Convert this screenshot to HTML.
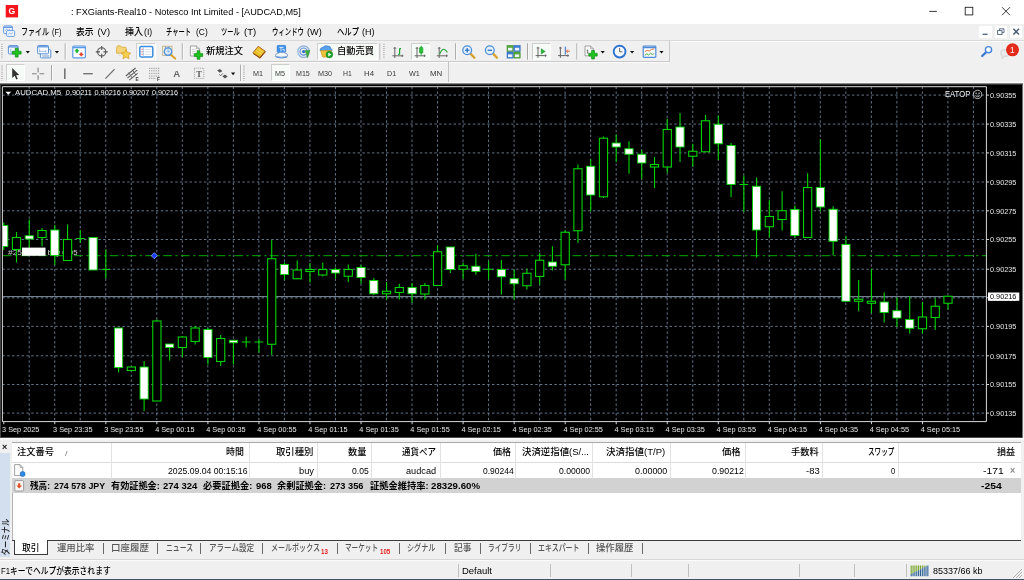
<!DOCTYPE html>
<html lang="ja"><head><meta charset="utf-8"><title>FXGiants-Real10 - Notesco Int Limited - [AUDCAD,M5]</title>
<style>
html,body{margin:0;padding:0}
body{width:1024px;height:580px;overflow:hidden;background:#f0f0f0;position:relative;font-family:'Liberation Sans','Noto Sans CJK JP',sans-serif}
.t{position:absolute;white-space:pre;transform-origin:0 50%;display:block}
.abs{position:absolute}
#root{position:absolute;left:0;top:0;width:1024px;height:580px;will-change:transform}
#titlebar{left:0;top:0;width:1024px;height:23.5px;background:#fff}
#menubar{left:0;top:23.5px;width:1024px;height:16.5px;background:#f0f0f0}
#tb1{left:0;top:40px;width:669.5px;height:22px;border-top:1px solid #d9d9d9;border-bottom:1px solid #c9c9c9;border-right:1px solid #c9c9c9;box-sizing:border-box;background:#f0f0f0}
#tb1line{left:0;top:40px;width:1024px;height:1px;background:#d9d9d9}
#tb1w{left:0;top:41px;width:1024px;height:1px;background:#fafafa}
#tb2{left:0;top:62px;width:448.5px;height:21px;border-right:1px solid #c4c4c4;box-sizing:border-box}
#tb2w{left:0;top:62px;width:669px;height:1px;background:#fbfbfb}
#tb2b{left:0;top:82.3px;width:1024px;height:1px;background:#fdfdfd}
.pressed{background:#f7fbf7;border:1px solid #fdfdfd;border-left-color:#cfcfcf;border-top-color:#cfcfcf;box-sizing:border-box}
#term{left:0;top:442px;width:1024px;height:115px}
#strip{left:0;top:453px;width:10.300px;height:103.500px;background:#d3dfee}
#table{left:11.500px;top:442px;width:1009.500px;height:99px;background:#fff;border-top:1px solid #a9a9a9;border-left:1px solid #b4b4b4;box-sizing:border-box}
#thead{left:11.5px;top:443px;width:1009.5px;height:19.5px;background:#fff;border-bottom:1px solid #dcdcdc;box-sizing:border-box}
#row1{left:11.5px;top:462.5px;width:1009.5px;height:16px;background:#fff}
#sum{left:11.500px;top:478.300px;width:1009.500px;height:15.200px;background:#d2d2d2}
.cs{position:absolute;top:443px;width:1px;height:35.5px;background:#e2e2e2}
#tabline{left:11.5px;top:540.3px;width:1009.5px;height:1.2px;background:#3c3c3c}
#tabact{left:13.6px;top:540.3px;width:34.8px;height:15px;background:#fff;border:1.2px solid #3c3c3c;border-top:none;box-sizing:border-box}
#stline{left:0;top:558.6px;width:1024px;height:1px;background:#d7d7d7}
#stline2{left:0;top:559.6px;width:1024px;height:1px;background:#fcfcfc}
#stbot{left:0;top:578.7px;width:1024px;height:1.3px;background:#44546a}
.ss{position:absolute;top:563.5px;width:1px;height:13.5px;background:#c0c0c0}
.mdi{position:absolute;top:25.7px;height:12.400px;background:#fff}
</style></head><body><div id="root">
<div id="titlebar" class="abs"></div>
<div id="menubar" class="abs"></div>
<div id="tb1line" class="abs"></div><div id="tb1w" class="abs"></div>
<div id="tb1" class="abs"></div><div id="tb2w" class="abs"></div>
<div id="tb2" class="abs"></div><div id="tb2b" class="abs"></div>
<div class="abs pressed" style="left:136px;top:43.3px;width:20.0px;height:17.0px"></div>
<div class="abs pressed" style="left:317.3px;top:43.3px;width:61.2px;height:17.0px"></div>
<div class="abs pressed" style="left:411px;top:43.3px;width:19.0px;height:17.0px"></div>
<div class="abs pressed" style="left:531.5px;top:43.3px;width:19.5px;height:17.0px"></div>
<div class="abs pressed" style="left:6px;top:64.3px;width:19.4px;height:17.0px"></div>
<div class="abs pressed" style="left:270.5px;top:64.3px;width:19.5px;height:17.0px"></div>
<div class="mdi" style="left:979px;width:13.2px"></div>
<div class="mdi" style="left:994.6px;width:12.8px"></div>
<div class="mdi" style="left:1009.6px;width:12.8px"></div>
<svg class="chart" width="1024" height="580" viewBox="0 0 1024 580" style="position:absolute;left:0;top:0" font-family="'Liberation Sans','Noto Sans CJK JP',sans-serif">
<defs><linearGradient id="tg" x1="0" y1="0" x2="0" y2="1"><stop offset="0" stop-color="#a8a8a8"/><stop offset="1" stop-color="#202020"/></linearGradient><clipPath id="cc"><rect x="2.9" y="86.7" width="983.5" height="334.90000000000003"/></clipPath></defs>
<rect x="0" y="83" width="1023" height="2" fill="url(#tg)"/>
<rect x="0" y="437.600" width="1024" height="1.900" fill="#fbfbfb"/>
<rect x="0" y="84.800" width="1022.300" height="352.900" fill="#000"/>
<rect x="0" y="84.8" width="0.8" height="352.8" fill="#555"/>
<rect x="1022" y="84" width="0.8" height="354" fill="#666"/>
<g stroke="#687b8f" stroke-width="0.95" stroke-dasharray="2.4 2.4" fill="none" clip-path="url(#cc)">
<path d="M29.20 86.7V421.6"/>
<path d="M54.72 86.7V421.6"/>
<path d="M80.24 86.7V421.6"/>
<path d="M105.76 86.7V421.6"/>
<path d="M131.28 86.7V421.6"/>
<path d="M156.80 86.7V421.6"/>
<path d="M182.32 86.7V421.6"/>
<path d="M207.84 86.7V421.6"/>
<path d="M233.36 86.7V421.6"/>
<path d="M258.88 86.7V421.6"/>
<path d="M284.40 86.7V421.6"/>
<path d="M309.92 86.7V421.6"/>
<path d="M335.44 86.7V421.6"/>
<path d="M360.96 86.7V421.6"/>
<path d="M386.48 86.7V421.6"/>
<path d="M412.00 86.7V421.6"/>
<path d="M437.52 86.7V421.6"/>
<path d="M463.04 86.7V421.6"/>
<path d="M488.56 86.7V421.6"/>
<path d="M514.08 86.7V421.6"/>
<path d="M539.60 86.7V421.6"/>
<path d="M565.12 86.7V421.6"/>
<path d="M590.64 86.7V421.6"/>
<path d="M616.16 86.7V421.6"/>
<path d="M641.68 86.7V421.6"/>
<path d="M667.20 86.7V421.6"/>
<path d="M692.72 86.7V421.6"/>
<path d="M718.24 86.7V421.6"/>
<path d="M743.76 86.7V421.6"/>
<path d="M769.28 86.7V421.6"/>
<path d="M794.80 86.7V421.6"/>
<path d="M820.32 86.7V421.6"/>
<path d="M845.84 86.7V421.6"/>
<path d="M871.36 86.7V421.6"/>
<path d="M896.88 86.7V421.6"/>
<path d="M922.40 86.7V421.6"/>
<path d="M947.92 86.7V421.6"/>
<path d="M973.44 86.7V421.6"/>
<path d="M2.4 95.10H986.4"/>
<path d="M2.4 124.10H986.4"/>
<path d="M2.4 152.90H986.4"/>
<path d="M2.4 182.00H986.4"/>
<path d="M2.4 210.80H986.4"/>
<path d="M2.4 239.50H986.4"/>
<path d="M2.4 269.20H986.4"/>
<path d="M2.4 297.80H986.4"/>
<path d="M2.4 326.40H986.4"/>
<path d="M2.4 355.80H986.4"/>
<path d="M2.4 384.50H986.4"/>
<path d="M2.4 413.10H986.4"/>
</g>
<path d="M2.9 255.7H986.4" stroke="#00aa00" stroke-width="1" stroke-dasharray="8.8 3.4 2.2 3.4" fill="none"/>
<path d="M2.9 296.6H986.4" stroke="#7e8d9d" stroke-width="1" fill="none"/>
<text x="8" y="254.6" font-size="7.3" fill="#d0d0d0" textLength="14" lengthAdjust="spacingAndGlyphs">#25</text>
<text x="47.5" y="254.6" font-size="7.3" fill="#d0d0d0" textLength="30" lengthAdjust="spacingAndGlyphs">buy 0.05</text>
<g clip-path="url(#cc)">
<path d="M3.75 222.5V250.0" stroke="#00d400" stroke-width="1.1"/>
<rect x="-0.35" y="225.5" width="8.20" height="21.00" fill="#fff" stroke="#00d400" stroke-width="0.9"/>
<path d="M16.51 232.0V262.5" stroke="#00d400" stroke-width="1.1"/>
<rect x="12.41" y="237.5" width="8.20" height="12.00" fill="#000" stroke="#00d400" stroke-width="1.1"/>
<path d="M29.27 219.5V250.0" stroke="#00d400" stroke-width="1.1"/>
<rect x="25.17" y="235.75" width="8.20" height="3.25" fill="#fff" stroke="#00d400" stroke-width="0.9"/>
<path d="M42.03 228.0V246.25" stroke="#00d400" stroke-width="1.1"/>
<rect x="37.93" y="230.5" width="8.20" height="7.00" fill="#000" stroke="#00d400" stroke-width="1.1"/>
<path d="M54.79 225.0V265.0" stroke="#00d400" stroke-width="1.1"/>
<rect x="50.69" y="230.0" width="8.20" height="25.50" fill="#fff" stroke="#00d400" stroke-width="0.9"/>
<path d="M67.55 224.5V260.5" stroke="#00d400" stroke-width="1.1"/>
<rect x="63.45" y="239.5" width="8.20" height="21.00" fill="#000" stroke="#00d400" stroke-width="1.1"/>
<path d="M80.31 230.0V243.0" stroke="#00d400" stroke-width="1.1"/>
<path d="M75.91 238.5H84.71" stroke="#00d400" stroke-width="1.1"/>
<path d="M93.07 237.5V270.0" stroke="#00d400" stroke-width="1.1"/>
<rect x="88.97" y="237.5" width="8.20" height="32.50" fill="#fff" stroke="#00d400" stroke-width="0.9"/>
<path d="M105.83 249.25V278.75" stroke="#00d400" stroke-width="1.1"/>
<path d="M101.43 269.5H110.23" stroke="#00d400" stroke-width="1.1"/>
<path d="M118.59 328.0V372.5" stroke="#00d400" stroke-width="1.1"/>
<rect x="114.49" y="328.0" width="8.20" height="39.50" fill="#fff" stroke="#00d400" stroke-width="0.9"/>
<path d="M131.35 367.0V370.5" stroke="#00d400" stroke-width="1.1"/>
<rect x="127.25" y="367.0" width="8.20" height="3.50" fill="#000" stroke="#00d400" stroke-width="1.1"/>
<path d="M144.11 361.0V411.0" stroke="#00d400" stroke-width="1.1"/>
<rect x="140.01" y="367.0" width="8.20" height="32.00" fill="#fff" stroke="#00d400" stroke-width="0.9"/>
<path d="M156.87 319.5V401.0" stroke="#00d400" stroke-width="1.1"/>
<rect x="152.77" y="321.0" width="8.20" height="80.00" fill="#000" stroke="#00d400" stroke-width="1.1"/>
<path d="M169.63 344.0V360.5" stroke="#00d400" stroke-width="1.1"/>
<rect x="165.53" y="344.0" width="8.20" height="3.50" fill="#fff" stroke="#00d400" stroke-width="0.9"/>
<path d="M182.39 336.0V357.0" stroke="#00d400" stroke-width="1.1"/>
<rect x="178.29" y="337.0" width="8.20" height="10.50" fill="#000" stroke="#00d400" stroke-width="1.1"/>
<path d="M195.15 326.0V344.5" stroke="#00d400" stroke-width="1.1"/>
<rect x="191.05" y="328.0" width="8.20" height="13.50" fill="#000" stroke="#00d400" stroke-width="1.1"/>
<path d="M207.91 328.0V364.5" stroke="#00d400" stroke-width="1.1"/>
<rect x="203.81" y="329.5" width="8.20" height="28.00" fill="#fff" stroke="#00d400" stroke-width="0.9"/>
<path d="M220.67 335.0V366.0" stroke="#00d400" stroke-width="1.1"/>
<rect x="216.57" y="338.5" width="8.20" height="23.00" fill="#000" stroke="#00d400" stroke-width="1.1"/>
<path d="M233.43 340.0V364.5" stroke="#00d400" stroke-width="1.1"/>
<rect x="229.33" y="340.25" width="8.20" height="2.50" fill="#fff" stroke="#00d400" stroke-width="0.9"/>
<path d="M246.19 336.5V347.5" stroke="#00d400" stroke-width="1.1"/>
<path d="M241.79 342.0H250.59" stroke="#00d400" stroke-width="1.1"/>
<path d="M258.95 339.0V352.5" stroke="#00d400" stroke-width="1.1"/>
<path d="M254.55 342.0H263.35" stroke="#00d400" stroke-width="1.1"/>
<path d="M271.71 240.0V355.0" stroke="#00d400" stroke-width="1.1"/>
<rect x="267.61" y="258.75" width="8.20" height="85.50" fill="#000" stroke="#00d400" stroke-width="1.1"/>
<path d="M284.47 262.5V280.0" stroke="#00d400" stroke-width="1.1"/>
<rect x="280.37" y="264.5" width="8.20" height="10.00" fill="#fff" stroke="#00d400" stroke-width="0.9"/>
<path d="M297.23 260.5V278.75" stroke="#00d400" stroke-width="1.1"/>
<rect x="293.13" y="270.0" width="8.20" height="8.75" fill="#000" stroke="#00d400" stroke-width="1.1"/>
<path d="M309.99 263.0V282.5" stroke="#00d400" stroke-width="1.1"/>
<rect x="305.89" y="269.5" width="8.20" height="2.00" fill="#000" stroke="#00d400" stroke-width="1.1"/>
<path d="M322.75 262.5V276.5" stroke="#00d400" stroke-width="1.1"/>
<rect x="318.65" y="269.5" width="8.20" height="5.50" fill="#000" stroke="#00d400" stroke-width="1.1"/>
<path d="M335.51 267.5V278.75" stroke="#00d400" stroke-width="1.1"/>
<rect x="331.41" y="269.5" width="8.20" height="3.50" fill="#fff" stroke="#00d400" stroke-width="0.9"/>
<path d="M348.27 264.5V282.0" stroke="#00d400" stroke-width="1.1"/>
<rect x="344.17" y="269.5" width="8.20" height="6.75" fill="#000" stroke="#00d400" stroke-width="1.1"/>
<path d="M361.03 265.0V283.75" stroke="#00d400" stroke-width="1.1"/>
<rect x="356.93" y="267.5" width="8.20" height="10.00" fill="#fff" stroke="#00d400" stroke-width="0.9"/>
<path d="M373.79 278.0V295.0" stroke="#00d400" stroke-width="1.1"/>
<rect x="369.69" y="280.5" width="8.20" height="13.25" fill="#fff" stroke="#00d400" stroke-width="0.9"/>
<path d="M386.55 282.0V299.5" stroke="#00d400" stroke-width="1.1"/>
<rect x="382.45" y="291.25" width="8.20" height="2.50" fill="#000" stroke="#00d400" stroke-width="1.1"/>
<path d="M399.31 283.75V299.5" stroke="#00d400" stroke-width="1.1"/>
<rect x="395.21" y="287.5" width="8.20" height="5.00" fill="#000" stroke="#00d400" stroke-width="1.1"/>
<path d="M412.07 283.0V303.0" stroke="#00d400" stroke-width="1.1"/>
<rect x="407.97" y="287.5" width="8.20" height="6.25" fill="#fff" stroke="#00d400" stroke-width="0.9"/>
<path d="M424.83 283.0V299.5" stroke="#00d400" stroke-width="1.1"/>
<rect x="420.73" y="285.5" width="8.20" height="8.50" fill="#000" stroke="#00d400" stroke-width="1.1"/>
<path d="M437.59 245.0V285.5" stroke="#00d400" stroke-width="1.1"/>
<rect x="433.49" y="251.75" width="8.20" height="33.75" fill="#000" stroke="#00d400" stroke-width="1.1"/>
<path d="M450.35 247.0V273.0" stroke="#00d400" stroke-width="1.1"/>
<rect x="446.25" y="247.0" width="8.20" height="22.50" fill="#fff" stroke="#00d400" stroke-width="0.9"/>
<path d="M463.11 262.5V279.0" stroke="#00d400" stroke-width="1.1"/>
<rect x="459.01" y="265.75" width="8.20" height="3.50" fill="#000" stroke="#00d400" stroke-width="1.1"/>
<path d="M475.87 253.75V274.75" stroke="#00d400" stroke-width="1.1"/>
<rect x="471.77" y="266.25" width="8.20" height="5.25" fill="#fff" stroke="#00d400" stroke-width="0.9"/>
<path d="M488.63 261.25V279.5" stroke="#00d400" stroke-width="1.1"/>
<path d="M484.23 269.25H493.03" stroke="#00d400" stroke-width="1.1"/>
<path d="M501.39 260.0V294.5" stroke="#00d400" stroke-width="1.1"/>
<rect x="497.29" y="269.5" width="8.20" height="7.25" fill="#fff" stroke="#00d400" stroke-width="0.9"/>
<path d="M514.15 269.5V299.5" stroke="#00d400" stroke-width="1.1"/>
<rect x="510.05" y="278.75" width="8.20" height="5.00" fill="#fff" stroke="#00d400" stroke-width="0.9"/>
<path d="M526.91 268.75V289.5" stroke="#00d400" stroke-width="1.1"/>
<rect x="522.81" y="273.25" width="8.20" height="12.50" fill="#000" stroke="#00d400" stroke-width="1.1"/>
<path d="M539.67 253.0V284.5" stroke="#00d400" stroke-width="1.1"/>
<rect x="535.57" y="260.25" width="8.20" height="16.25" fill="#000" stroke="#00d400" stroke-width="1.1"/>
<path d="M552.43 246.25V270.5" stroke="#00d400" stroke-width="1.1"/>
<rect x="548.33" y="262.0" width="8.20" height="4.25" fill="#fff" stroke="#00d400" stroke-width="0.9"/>
<path d="M565.19 230.0V279.5" stroke="#00d400" stroke-width="1.1"/>
<rect x="561.09" y="232.25" width="8.20" height="32.50" fill="#000" stroke="#00d400" stroke-width="1.1"/>
<path d="M577.95 164.5V243.0" stroke="#00d400" stroke-width="1.1"/>
<rect x="573.85" y="168.75" width="8.20" height="62.00" fill="#000" stroke="#00d400" stroke-width="1.1"/>
<path d="M590.71 159.25V211.25" stroke="#00d400" stroke-width="1.1"/>
<rect x="586.61" y="166.25" width="8.20" height="28.75" fill="#fff" stroke="#00d400" stroke-width="0.9"/>
<path d="M603.47 136.5V198.0" stroke="#00d400" stroke-width="1.1"/>
<rect x="599.37" y="138.25" width="8.20" height="58.50" fill="#000" stroke="#00d400" stroke-width="1.1"/>
<path d="M616.23 134.5V162.0" stroke="#00d400" stroke-width="1.1"/>
<rect x="612.13" y="143.0" width="8.20" height="4.00" fill="#fff" stroke="#00d400" stroke-width="0.9"/>
<path d="M628.99 141.25V173.75" stroke="#00d400" stroke-width="1.1"/>
<rect x="624.89" y="148.75" width="8.20" height="5.50" fill="#fff" stroke="#00d400" stroke-width="0.9"/>
<path d="M641.75 150.0V178.75" stroke="#00d400" stroke-width="1.1"/>
<rect x="637.65" y="154.25" width="8.20" height="8.75" fill="#fff" stroke="#00d400" stroke-width="0.9"/>
<path d="M654.51 157.0V188.0" stroke="#00d400" stroke-width="1.1"/>
<rect x="650.41" y="164.5" width="8.20" height="2.50" fill="#000" stroke="#00d400" stroke-width="1.1"/>
<path d="M667.27 118.75V173.0" stroke="#00d400" stroke-width="1.1"/>
<rect x="663.17" y="129.5" width="8.20" height="37.50" fill="#000" stroke="#00d400" stroke-width="1.1"/>
<path d="M680.03 113.0V162.0" stroke="#00d400" stroke-width="1.1"/>
<rect x="675.93" y="127.0" width="8.20" height="20.00" fill="#fff" stroke="#00d400" stroke-width="0.9"/>
<path d="M692.79 143.75V167.0" stroke="#00d400" stroke-width="1.1"/>
<rect x="688.69" y="151.25" width="8.20" height="5.00" fill="#000" stroke="#00d400" stroke-width="1.1"/>
<path d="M705.55 115.0V151.75" stroke="#00d400" stroke-width="1.1"/>
<rect x="701.45" y="120.75" width="8.20" height="31.00" fill="#000" stroke="#00d400" stroke-width="1.1"/>
<path d="M718.31 115.5V160.0" stroke="#00d400" stroke-width="1.1"/>
<rect x="714.21" y="124.25" width="8.20" height="19.50" fill="#fff" stroke="#00d400" stroke-width="0.9"/>
<path d="M731.07 143.0V197.0" stroke="#00d400" stroke-width="1.1"/>
<rect x="726.97" y="145.5" width="8.20" height="39.00" fill="#fff" stroke="#00d400" stroke-width="0.9"/>
<path d="M743.83 175.5V212.0" stroke="#00d400" stroke-width="1.1"/>
<path d="M739.43 184.5H748.23" stroke="#00d400" stroke-width="1.1"/>
<path d="M756.59 177.5V257.5" stroke="#00d400" stroke-width="1.1"/>
<rect x="752.49" y="186.25" width="8.20" height="43.75" fill="#fff" stroke="#00d400" stroke-width="0.9"/>
<path d="M769.35 200.0V237.5" stroke="#00d400" stroke-width="1.1"/>
<rect x="765.25" y="216.5" width="8.20" height="10.25" fill="#000" stroke="#00d400" stroke-width="1.1"/>
<path d="M782.11 191.25V230.5" stroke="#00d400" stroke-width="1.1"/>
<rect x="778.01" y="210.75" width="8.20" height="8.75" fill="#000" stroke="#00d400" stroke-width="1.1"/>
<path d="M794.87 205.5V237.75" stroke="#00d400" stroke-width="1.1"/>
<rect x="790.77" y="209.5" width="8.20" height="26.00" fill="#fff" stroke="#00d400" stroke-width="0.9"/>
<path d="M807.63 173.25V237.5" stroke="#00d400" stroke-width="1.1"/>
<rect x="803.53" y="187.5" width="8.20" height="50.00" fill="#000" stroke="#00d400" stroke-width="1.1"/>
<path d="M820.39 139.25V211.25" stroke="#00d400" stroke-width="1.1"/>
<rect x="816.29" y="187.5" width="8.20" height="19.50" fill="#fff" stroke="#00d400" stroke-width="0.9"/>
<path d="M833.15 206.25V255.5" stroke="#00d400" stroke-width="1.1"/>
<rect x="829.05" y="209.25" width="8.20" height="32.00" fill="#fff" stroke="#00d400" stroke-width="0.9"/>
<path d="M845.91 236.25V301.25" stroke="#00d400" stroke-width="1.1"/>
<rect x="841.81" y="244.5" width="8.20" height="56.75" fill="#fff" stroke="#00d400" stroke-width="0.9"/>
<path d="M858.67 280.0V311.25" stroke="#00d400" stroke-width="1.1"/>
<rect x="854.57" y="299.25" width="8.20" height="2.00" fill="#000" stroke="#00d400" stroke-width="1.1"/>
<path d="M871.43 268.75V313.0" stroke="#00d400" stroke-width="1.1"/>
<rect x="867.33" y="301.25" width="8.20" height="2.00" fill="#000" stroke="#00d400" stroke-width="1.1"/>
<path d="M884.19 292.5V322.5" stroke="#00d400" stroke-width="1.1"/>
<rect x="880.09" y="302.0" width="8.20" height="10.50" fill="#fff" stroke="#00d400" stroke-width="0.9"/>
<path d="M896.95 297.5V327.0" stroke="#00d400" stroke-width="1.1"/>
<rect x="892.85" y="310.75" width="8.20" height="7.25" fill="#fff" stroke="#00d400" stroke-width="0.9"/>
<path d="M909.71 296.25V333.75" stroke="#00d400" stroke-width="1.1"/>
<rect x="905.61" y="319.5" width="8.20" height="8.75" fill="#fff" stroke="#00d400" stroke-width="0.9"/>
<path d="M922.47 302.0V333.75" stroke="#00d400" stroke-width="1.1"/>
<rect x="918.37" y="317.0" width="8.20" height="11.75" fill="#000" stroke="#00d400" stroke-width="1.1"/>
<path d="M935.23 298.25V330.0" stroke="#00d400" stroke-width="1.1"/>
<rect x="931.13" y="306.25" width="8.20" height="11.25" fill="#000" stroke="#00d400" stroke-width="1.1"/>
<path d="M947.99 296.25V309.5" stroke="#00d400" stroke-width="1.1"/>
<rect x="943.89" y="296.25" width="8.20" height="7.00" fill="#000" stroke="#00d400" stroke-width="1.1"/>
</g>
<rect x="22" y="247.6" width="23.5" height="8.2" fill="#fff"/>
<path d="M154.3 252.6L157.4 255.7L154.3 258.8L151.2 255.7Z" fill="#1a3cff" stroke="#b8c4ff" stroke-width="0.6"/>
<path d="M2.4 421.6V86.7H986.4V421.6Z" fill="none" stroke="#d8d8d8" stroke-width="1"/>
<g font-size="7.3" fill="#e8e8e8">
<path d="M3.75 421.6v2.6" stroke="#d8d8d8" stroke-width="1"/>
<text x="2.05" y="432.1">3 Sep 2025</text>
<path d="M54.79 421.6v2.6" stroke="#d8d8d8" stroke-width="1"/>
<text x="53.09" y="432.1">3 Sep 23:35</text>
<path d="M105.83 421.6v2.6" stroke="#d8d8d8" stroke-width="1"/>
<text x="104.13" y="432.1">3 Sep 23:55</text>
<path d="M156.87 421.6v2.6" stroke="#d8d8d8" stroke-width="1"/>
<text x="155.17" y="432.1">4 Sep 00:15</text>
<path d="M207.91 421.6v2.6" stroke="#d8d8d8" stroke-width="1"/>
<text x="206.21" y="432.1">4 Sep 00:35</text>
<path d="M258.95 421.6v2.6" stroke="#d8d8d8" stroke-width="1"/>
<text x="257.25" y="432.1">4 Sep 00:55</text>
<path d="M309.99 421.6v2.6" stroke="#d8d8d8" stroke-width="1"/>
<text x="308.29" y="432.1">4 Sep 01:15</text>
<path d="M361.03 421.6v2.6" stroke="#d8d8d8" stroke-width="1"/>
<text x="359.33" y="432.1">4 Sep 01:35</text>
<path d="M412.07 421.6v2.6" stroke="#d8d8d8" stroke-width="1"/>
<text x="410.37" y="432.1">4 Sep 01:55</text>
<path d="M463.11 421.6v2.6" stroke="#d8d8d8" stroke-width="1"/>
<text x="461.41" y="432.1">4 Sep 02:15</text>
<path d="M514.15 421.6v2.6" stroke="#d8d8d8" stroke-width="1"/>
<text x="512.45" y="432.1">4 Sep 02:35</text>
<path d="M565.19 421.6v2.6" stroke="#d8d8d8" stroke-width="1"/>
<text x="563.49" y="432.1">4 Sep 02:55</text>
<path d="M616.23 421.6v2.6" stroke="#d8d8d8" stroke-width="1"/>
<text x="614.53" y="432.1">4 Sep 03:15</text>
<path d="M667.27 421.6v2.6" stroke="#d8d8d8" stroke-width="1"/>
<text x="665.57" y="432.1">4 Sep 03:35</text>
<path d="M718.31 421.6v2.6" stroke="#d8d8d8" stroke-width="1"/>
<text x="716.61" y="432.1">4 Sep 03:55</text>
<path d="M769.35 421.6v2.6" stroke="#d8d8d8" stroke-width="1"/>
<text x="767.65" y="432.1">4 Sep 04:15</text>
<path d="M820.39 421.6v2.6" stroke="#d8d8d8" stroke-width="1"/>
<text x="818.69" y="432.1">4 Sep 04:35</text>
<path d="M871.43 421.6v2.6" stroke="#d8d8d8" stroke-width="1"/>
<text x="869.73" y="432.1">4 Sep 04:55</text>
<path d="M922.47 421.6v2.6" stroke="#d8d8d8" stroke-width="1"/>
<text x="920.77" y="432.1">4 Sep 05:15</text>
</g>
<g font-size="7.3" fill="#e8e8e8">
<path d="M986.4 95.10h2.6" stroke="#d8d8d8" stroke-width="1"/>
<text x="990" y="97.80">0.90355</text>
<path d="M986.4 124.10h2.6" stroke="#d8d8d8" stroke-width="1"/>
<text x="990" y="126.80">0.90335</text>
<path d="M986.4 152.90h2.6" stroke="#d8d8d8" stroke-width="1"/>
<text x="990" y="155.60">0.90315</text>
<path d="M986.4 182.00h2.6" stroke="#d8d8d8" stroke-width="1"/>
<text x="990" y="184.70">0.90295</text>
<path d="M986.4 210.80h2.6" stroke="#d8d8d8" stroke-width="1"/>
<text x="990" y="213.50">0.90275</text>
<path d="M986.4 239.50h2.6" stroke="#d8d8d8" stroke-width="1"/>
<text x="990" y="242.20">0.90255</text>
<path d="M986.4 269.20h2.6" stroke="#d8d8d8" stroke-width="1"/>
<text x="990" y="271.90">0.90235</text>
<path d="M986.4 297.80h2.6" stroke="#d8d8d8" stroke-width="1"/>
<text x="990" y="300.50">0.90215</text>
<path d="M986.4 326.40h2.6" stroke="#d8d8d8" stroke-width="1"/>
<text x="990" y="329.10">0.90195</text>
<path d="M986.4 355.80h2.6" stroke="#d8d8d8" stroke-width="1"/>
<text x="990" y="358.50">0.90175</text>
<path d="M986.4 384.50h2.6" stroke="#d8d8d8" stroke-width="1"/>
<text x="990" y="387.20">0.90155</text>
<path d="M986.4 413.10h2.6" stroke="#d8d8d8" stroke-width="1"/>
<text x="990" y="415.80">0.90135</text>
</g>
<rect x="988" y="292.5" width="31.3" height="8.3" fill="#fff"/>
<text x="990" y="299.3" font-size="7.3" fill="#000">0.90216</text>
<path d="M5.4 91.7h5.8l-2.9 3.1z" fill="#fff"/>
<text x="15" y="95.1" font-size="7.3" fill="#f0f0f0" textLength="46.1" lengthAdjust="spacingAndGlyphs">AUDCAD,M5</text>
<text x="65.8" y="95.1" font-size="7.3" fill="#f0f0f0" textLength="26.1" lengthAdjust="spacingAndGlyphs">0.90211</text>
<text x="94.5" y="95.1" font-size="7.3" fill="#f0f0f0" textLength="26.4" lengthAdjust="spacingAndGlyphs">0.90216</text>
<text x="122.9" y="95.1" font-size="7.3" fill="#f0f0f0" textLength="26.4" lengthAdjust="spacingAndGlyphs">0.90207</text>
<text x="152" y="95.1" font-size="7.3" fill="#f0f0f0" textLength="26.0" lengthAdjust="spacingAndGlyphs">0.90216</text>
<text x="944.9" y="96.9" font-size="8.2" fill="#f0f0f0" textLength="25.4" lengthAdjust="spacingAndGlyphs">EATOP</text>
<g fill="none" stroke="#e0e0e0" stroke-width="0.8"><circle cx="977.6" cy="94.4" r="4.2"/><path d="M975.3 95.6q2.3 2.4 4.6 0"/></g><circle cx="976.1" cy="93.2" r="0.7" fill="#e0e0e0"/><circle cx="979.1" cy="93.2" r="0.7" fill="#e0e0e0"/>
</svg>
<div id="strip" class="abs"></div>
<div id="table" class="abs"></div><div id="thead" class="abs"></div><div id="row1" class="abs"></div><div id="sum" class="abs"></div>
<div class="cs" style="left:111px"></div>
<div class="cs" style="left:248.8px"></div>
<div class="cs" style="left:317.4px"></div>
<div class="cs" style="left:370.8px"></div>
<div class="cs" style="left:439.6px"></div>
<div class="cs" style="left:515.4px"></div>
<div class="cs" style="left:592.3px"></div>
<div class="cs" style="left:669.6px"></div>
<div class="cs" style="left:744.9px"></div>
<div class="cs" style="left:822.4px"></div>
<div class="cs" style="left:898.1px"></div>
<div id="tabline" class="abs"></div><div id="tabact" class="abs"></div>
<div id="stline" class="abs"></div><div id="stline2" class="abs"></div><div id="stbot" class="abs"></div>
<div class="ss" style="left:457.5px"></div>
<div class="ss" style="left:549.5px"></div>
<div class="ss" style="left:631.3px"></div>
<div class="ss" style="left:687.5px"></div>
<div class="ss" style="left:798.5px"></div>
<div class="ss" style="left:853.5px"></div>
<div class="ss" style="left:906.3px"></div>
<div class="abs" style="left:102.5px;top:543.2px;width:1px;height:10.6px;background:#6a6a6a"></div>
<div class="abs" style="left:156.5px;top:543.2px;width:1px;height:10.6px;background:#6a6a6a"></div>
<div class="abs" style="left:200.0px;top:543.2px;width:1px;height:10.6px;background:#6a6a6a"></div>
<div class="abs" style="left:262.0px;top:543.2px;width:1px;height:10.6px;background:#6a6a6a"></div>
<div class="abs" style="left:336.5px;top:543.2px;width:1px;height:10.6px;background:#6a6a6a"></div>
<div class="abs" style="left:398.8px;top:543.2px;width:1px;height:10.6px;background:#6a6a6a"></div>
<div class="abs" style="left:445.0px;top:543.2px;width:1px;height:10.6px;background:#6a6a6a"></div>
<div class="abs" style="left:480.0px;top:543.2px;width:1px;height:10.6px;background:#6a6a6a"></div>
<div class="abs" style="left:529.5px;top:543.2px;width:1px;height:10.6px;background:#6a6a6a"></div>
<div class="abs" style="left:587.5px;top:543.2px;width:1px;height:10.6px;background:#6a6a6a"></div>
<div class="abs" style="left:642.0px;top:543.2px;width:1px;height:10.6px;background:#6a6a6a"></div>
<span class="t" id="vterm" style="left:5.8px;top:532.3px;height:10px;line-height:10px;font-size:9px;color:#222;font-weight:500;transform-origin:0 50%;transform:rotate(-90deg) translate(-18.4px,0) scaleX(0.815)">ターミナル</span>
<span class="t" style="left:1.900px;top:440.700px;font-size:9px;line-height:12px;font-weight:700;color:#111">×</span>
<span class="t" id="t0" style="left:71.3px;top:4.20px;height:15.4px;line-height:15.4px;font-size:9.6px;color:#000;font-weight:500;transform:scaleX(0.9574);">: FXGiants-Real10 - Notesco Int Limited - [AUDCAD,M5]</span>
<span class="t" id="t1" style="left:21.3px;top:24.30px;height:15.0px;line-height:15.0px;font-size:9.4px;color:#000;font-weight:500;transform:scaleX(0.7464);">ファイル</span>
<span class="t" id="t2" style="left:51.8px;top:24.30px;height:15.0px;line-height:15.0px;font-size:9.4px;color:#000;font-weight:500;transform:scaleX(0.7927);">(F)</span>
<span class="t" id="t3" style="left:76.3px;top:24.30px;height:15.0px;line-height:15.0px;font-size:9.4px;color:#000;font-weight:500;transform:scaleX(0.9326);">表示</span>
<span class="t" id="t4" style="left:97.5px;top:24.30px;height:15.0px;line-height:15.0px;font-size:9.4px;color:#000;font-weight:500;transform:scaleX(1.0000);">(V)</span>
<span class="t" id="t5" style="left:125px;top:24.30px;height:15.0px;line-height:15.0px;font-size:9.4px;color:#000;font-weight:500;transform:scaleX(0.9592);">挿入</span>
<span class="t" id="t6" style="left:143.8px;top:24.30px;height:15.0px;line-height:15.0px;font-size:9.4px;color:#000;font-weight:500;transform:scaleX(0.9256);">(I)</span>
<span class="t" id="t7" style="left:166.3px;top:24.30px;height:15.0px;line-height:15.0px;font-size:9.4px;color:#000;font-weight:500;transform:scaleX(0.6681);">チャート</span>
<span class="t" id="t8" style="left:195.8px;top:24.30px;height:15.0px;line-height:15.0px;font-size:9.4px;color:#000;font-weight:500;transform:scaleX(0.8989);">(C)</span>
<span class="t" id="t9" style="left:221.3px;top:24.30px;height:15.0px;line-height:15.0px;font-size:9.4px;color:#000;font-weight:500;transform:scaleX(0.6645);">ツール</span>
<span class="t" id="t10" style="left:243.8px;top:24.30px;height:15.0px;line-height:15.0px;font-size:9.4px;color:#000;font-weight:500;transform:scaleX(1.0180);">(T)</span>
<span class="t" id="t11" style="left:271.5px;top:24.30px;height:15.0px;line-height:15.0px;font-size:9.4px;color:#000;font-weight:500;transform:scaleX(0.6824);">ウィンドウ</span>
<span class="t" id="t12" style="left:306.8px;top:24.30px;height:15.0px;line-height:15.0px;font-size:9.4px;color:#000;font-weight:500;transform:scaleX(0.9739);">(W)</span>
<span class="t" id="t13" style="left:336.5px;top:24.30px;height:15.0px;line-height:15.0px;font-size:9.4px;color:#000;font-weight:500;transform:scaleX(0.7818);">ヘルプ</span>
<span class="t" id="t14" style="left:362.3px;top:24.30px;height:15.0px;line-height:15.0px;font-size:9.4px;color:#000;font-weight:500;transform:scaleX(0.9604);">(H)</span>
<span class="t" id="t15" style="left:205.5px;top:44.15px;height:14.9px;line-height:14.9px;font-size:9.3px;color:#000;font-weight:500;transform:scaleX(0.9945);">新規注文</span>
<span class="t" id="t16" style="left:336.5px;top:44.15px;height:14.9px;line-height:14.9px;font-size:9.3px;color:#000;font-weight:500;transform:scaleX(0.9945);">自動売買</span>
<span class="t" id="t17" style="left:252.5px;top:67.80px;height:12.2px;line-height:12.2px;font-size:7.6px;color:#383838;font-weight:500;transform:scaleX(0.9467);">M1</span>
<span class="t" id="t18" style="left:275px;top:67.80px;height:12.2px;line-height:12.2px;font-size:7.6px;color:#383838;font-weight:500;transform:scaleX(0.9467);">M5</span>
<span class="t" id="t19" style="left:295.6px;top:67.80px;height:12.2px;line-height:12.2px;font-size:7.6px;color:#383838;font-weight:500;transform:scaleX(0.9336);">M15</span>
<span class="t" id="t20" style="left:317.8px;top:67.80px;height:12.2px;line-height:12.2px;font-size:7.6px;color:#383838;font-weight:500;transform:scaleX(0.9539);">M30</span>
<span class="t" id="t21" style="left:342.5px;top:67.80px;height:12.2px;line-height:12.2px;font-size:7.6px;color:#383838;font-weight:500;transform:scaleX(0.9055);">H1</span>
<span class="t" id="t22" style="left:364px;top:67.80px;height:12.2px;line-height:12.2px;font-size:7.6px;color:#383838;font-weight:500;transform:scaleX(1.0289);">H4</span>
<span class="t" id="t23" style="left:387.3px;top:67.80px;height:12.2px;line-height:12.2px;font-size:7.6px;color:#383838;font-weight:500;transform:scaleX(0.9466);">D1</span>
<span class="t" id="t24" style="left:409.4px;top:67.80px;height:12.2px;line-height:12.2px;font-size:7.6px;color:#383838;font-weight:500;transform:scaleX(0.9569);">W1</span>
<span class="t" id="t25" style="left:430px;top:67.80px;height:12.2px;line-height:12.2px;font-size:7.6px;color:#383838;font-weight:500;transform:scaleX(1.0413);">MN</span>
<span class="t" id="t26" style="left:17px;top:445.15px;height:14.9px;line-height:14.9px;font-size:9.3px;color:#000;font-weight:500;transform:scaleX(0.9945);">注文番号</span>
<span class="t" id="t27" style="left:64.5px;top:447.50px;height:11.2px;line-height:11.2px;font-size:7px;color:#777;font-weight:500;transform:scaleX(1.2800);">/</span>
<span class="t" id="t28" style="left:226.3px;top:445.15px;height:14.9px;line-height:14.9px;font-size:9.3px;color:#000;font-weight:500;transform:scaleX(0.9619);">時間</span>
<span class="t" id="t29" style="left:275.5px;top:445.15px;height:14.9px;line-height:14.9px;font-size:9.3px;color:#000;font-weight:500;transform:scaleX(1.0080);">取引種別</span>
<span class="t" id="t30" style="left:348.4px;top:445.15px;height:14.9px;line-height:14.9px;font-size:9.3px;color:#000;font-weight:500;transform:scaleX(0.9887);">数量</span>
<span class="t" id="t31" style="left:401.9px;top:445.15px;height:14.9px;line-height:14.9px;font-size:9.3px;color:#000;font-weight:500;transform:scaleX(0.9139);">通貨ペア</span>
<span class="t" id="t32" style="left:493px;top:445.15px;height:14.9px;line-height:14.9px;font-size:9.3px;color:#000;font-weight:500;transform:scaleX(0.9673);">価格</span>
<span class="t" id="t33" style="left:522px;top:445.15px;height:14.9px;line-height:14.9px;font-size:9.3px;color:#000;font-weight:500;transform:scaleX(1.0132);">決済逆指値(S/...</span>
<span class="t" id="t34" style="left:606.2px;top:445.15px;height:14.9px;line-height:14.9px;font-size:9.3px;color:#000;font-weight:500;transform:scaleX(1.0234);">決済指値(T/P)</span>
<span class="t" id="t35" style="left:722.2px;top:445.15px;height:14.9px;line-height:14.9px;font-size:9.3px;color:#000;font-weight:500;transform:scaleX(0.9995);">価格</span>
<span class="t" id="t36" style="left:790.5px;top:445.15px;height:14.9px;line-height:14.9px;font-size:9.3px;color:#000;font-weight:500;transform:scaleX(0.9926);">手数料</span>
<span class="t" id="t37" style="left:868.3px;top:445.15px;height:14.9px;line-height:14.9px;font-size:9.3px;color:#000;font-weight:500;transform:scaleX(0.7123);">スワップ</span>
<span class="t" id="t38" style="left:997.3px;top:445.15px;height:14.9px;line-height:14.9px;font-size:9.3px;color:#000;font-weight:500;transform:scaleX(0.9726);">損益</span>
<span class="t" id="t39" style="left:167.5px;top:463.55px;height:14.1px;line-height:14.1px;font-size:8.8px;color:#000;font-weight:500;transform:scaleX(0.9849);">2025.09.04 00:15:16</span>
<span class="t" id="t40" style="left:299px;top:463.55px;height:14.1px;line-height:14.1px;font-size:8.8px;color:#000;font-weight:500;transform:scaleX(1.0573);">buy</span>
<span class="t" id="t41" style="left:351.8px;top:463.55px;height:14.1px;line-height:14.1px;font-size:8.8px;color:#000;font-weight:500;transform:scaleX(0.9752);">0.05</span>
<span class="t" id="t42" style="left:406.2px;top:463.55px;height:14.1px;line-height:14.1px;font-size:8.8px;color:#000;font-weight:500;transform:scaleX(1.0424);">audcad</span>
<span class="t" id="t43" style="left:483px;top:463.55px;height:14.1px;line-height:14.1px;font-size:8.8px;color:#000;font-weight:500;transform:scaleX(0.9682);">0.90244</span>
<span class="t" id="t44" style="left:558.8px;top:463.55px;height:14.1px;line-height:14.1px;font-size:8.8px;color:#000;font-weight:500;transform:scaleX(0.9776);">0.00000</span>
<span class="t" id="t45" style="left:635.2px;top:463.55px;height:14.1px;line-height:14.1px;font-size:8.8px;color:#000;font-weight:500;transform:scaleX(1.0153);">0.00000</span>
<span class="t" id="t46" style="left:711.8px;top:463.55px;height:14.1px;line-height:14.1px;font-size:8.8px;color:#000;font-weight:500;transform:scaleX(1.0028);">0.90212</span>
<span class="t" id="t47" style="left:805.8px;top:463.55px;height:14.1px;line-height:14.1px;font-size:8.8px;color:#000;font-weight:500;transform:scaleX(1.0771);">-83</span>
<span class="t" id="t48" style="left:891px;top:463.55px;height:14.1px;line-height:14.1px;font-size:8.8px;color:#000;font-weight:500;transform:scaleX(0.8561);">0</span>
<span class="t" id="t49" style="left:983px;top:463.55px;height:14.1px;line-height:14.1px;font-size:8.8px;color:#000;font-weight:500;transform:scaleX(1.1755);">-171</span>
<span class="t" id="t50" style="left:1009.6px;top:462.60px;height:16.0px;line-height:16.0px;font-size:10px;color:#8c8c8c;font-weight:700;transform:scaleX(0.8898);">×</span>
<span class="t" id="t51" style="left:30px;top:478.65px;height:14.7px;line-height:14.7px;font-size:9.2px;color:#000;font-weight:700;transform:scaleX(0.9329);">残高:</span>
<span class="t" id="t52" style="left:54.1px;top:478.65px;height:14.7px;line-height:14.7px;font-size:9.2px;color:#000;font-weight:700;transform:scaleX(0.9616);">274 578 JPY</span>
<span class="t" id="t53" style="left:110.9px;top:478.65px;height:14.7px;line-height:14.7px;font-size:9.2px;color:#000;font-weight:700;transform:scaleX(0.9959);">有効証拠金:</span>
<span class="t" id="t54" style="left:162.7px;top:478.65px;height:14.7px;line-height:14.7px;font-size:9.2px;color:#000;font-weight:700;transform:scaleX(1.0325);">274 324</span>
<span class="t" id="t55" style="left:203px;top:478.65px;height:14.7px;line-height:14.7px;font-size:9.2px;color:#000;font-weight:700;transform:scaleX(1.0041);">必要証拠金:</span>
<span class="t" id="t56" style="left:255.5px;top:478.65px;height:14.7px;line-height:14.7px;font-size:9.2px;color:#000;font-weight:700;transform:scaleX(1.0232);">968</span>
<span class="t" id="t57" style="left:277.2px;top:478.65px;height:14.7px;line-height:14.7px;font-size:9.2px;color:#000;font-weight:700;transform:scaleX(1.0020);">余剰証拠金:</span>
<span class="t" id="t58" style="left:330px;top:478.65px;height:14.7px;line-height:14.7px;font-size:9.2px;color:#000;font-weight:700;transform:scaleX(1.0085);">273 356</span>
<span class="t" id="t59" style="left:370.1px;top:478.65px;height:14.7px;line-height:14.7px;font-size:9.2px;color:#000;font-weight:700;transform:scaleX(1.0054);">証拠金維持率:</span>
<span class="t" id="t60" style="left:431.3px;top:478.65px;height:14.7px;line-height:14.7px;font-size:9.2px;color:#000;font-weight:700;transform:scaleX(1.0559);">28329.60%</span>
<span class="t" id="t61" style="left:981px;top:478.95px;height:14.1px;line-height:14.1px;font-size:8.8px;color:#000;font-weight:700;transform:scaleX(1.1755);">-254</span>
<span class="t" id="t62" style="left:22px;top:540.75px;height:14.9px;line-height:14.9px;font-size:9.3px;color:#000;font-weight:500;transform:scaleX(0.9404);">取引</span>
<span class="t" id="t63" style="left:57px;top:540.75px;height:14.9px;line-height:14.9px;font-size:9.3px;color:#555;font-weight:500;transform:scaleX(1.0080);">運用比率</span>
<span class="t" id="t64" style="left:111px;top:540.75px;height:14.9px;line-height:14.9px;font-size:9.3px;color:#555;font-weight:500;transform:scaleX(1.0214);">口座履歴</span>
<span class="t" id="t65" style="left:165.5px;top:540.75px;height:14.9px;line-height:14.9px;font-size:9.3px;color:#555;font-weight:500;transform:scaleX(0.7350);">ニュース</span>
<span class="t" id="t66" style="left:209px;top:540.75px;height:14.9px;line-height:14.9px;font-size:9.3px;color:#555;font-weight:500;transform:scaleX(0.8106);">アラーム設定</span>
<span class="t" id="t67" style="left:270.5px;top:540.75px;height:14.9px;line-height:14.9px;font-size:9.3px;color:#555;font-weight:500;transform:scaleX(0.7560);">メールボックス</span>
<span class="t" id="t68" style="left:344.5px;top:540.75px;height:14.9px;line-height:14.9px;font-size:9.3px;color:#555;font-weight:500;transform:scaleX(0.7097);">マーケット</span>
<span class="t" id="t69" style="left:407px;top:540.75px;height:14.9px;line-height:14.9px;font-size:9.3px;color:#555;font-weight:500;transform:scaleX(0.7661);">シグナル</span>
<span class="t" id="t70" style="left:453.8px;top:540.75px;height:14.9px;line-height:14.9px;font-size:9.3px;color:#555;font-weight:500;transform:scaleX(0.9404);">記事</span>
<span class="t" id="t71" style="left:488px;top:540.75px;height:14.9px;line-height:14.9px;font-size:9.3px;color:#555;font-weight:500;transform:scaleX(0.7161);">ライブラリ</span>
<span class="t" id="t72" style="left:538px;top:540.75px;height:14.9px;line-height:14.9px;font-size:9.3px;color:#555;font-weight:500;transform:scaleX(0.7475);">エキスパート</span>
<span class="t" id="t73" style="left:596.3px;top:540.75px;height:14.9px;line-height:14.9px;font-size:9.3px;color:#555;font-weight:500;transform:scaleX(1.0080);">操作履歴</span>
<span class="t" id="t74" style="left:321.3px;top:546.40px;height:11.2px;line-height:11.2px;font-size:7px;color:#e0201c;font-weight:700;transform:scaleX(0.8850);">13</span>
<span class="t" id="t75" style="left:380px;top:546.40px;height:11.2px;line-height:11.2px;font-size:7px;color:#e0201c;font-weight:700;transform:scaleX(0.8727);">105</span>
<span class="t" id="t76" style="left:1.3px;top:563.55px;height:14.9px;line-height:14.9px;font-size:9.3px;color:#000;font-weight:500;transform:scaleX(0.8364);">F1キーでヘルプが表示されます</span>
<span class="t" id="t77" style="left:462px;top:563.90px;height:14.2px;line-height:14.2px;font-size:8.9px;color:#000;font-weight:500;transform:scaleX(1.0667);">Default</span>
<span class="t" id="t78" style="left:932.5px;top:563.90px;height:14.2px;line-height:14.2px;font-size:8.9px;color:#000;font-weight:500;transform:scaleX(1.0131);">85337/66 kb</span>
<svg width="1024" height="580" viewBox="0 0 1024 580" style="position:absolute;left:0;top:0;pointer-events:none" font-family="'Liberation Sans','Noto Sans CJK JP',sans-serif">
<rect x="5.700" y="5" width="12.400" height="12.400" fill="#f5151d"/>
<text x="11.900" y="14.300" font-size="8.600" font-weight="700" fill="#fff" text-anchor="middle">G</text>
<path d="M929.3 11.4h7.6" stroke="#222" stroke-width="0.9"/>
<rect x="965.2" y="7.3" width="7.6" height="7.6" fill="none" stroke="#222" stroke-width="0.9"/>
<path d="M1002 7.2l8 8M1010 7.2l-8 8" stroke="#222" stroke-width="0.9"/>
<rect x="3.600" y="25.900" width="8.800" height="7.800" rx="1.200" fill="#e9f2fc" stroke="#5a92dc" stroke-width="0.900"/><path d="M3.600 27.300h8.800" stroke="#5a92dc" stroke-width="1.200"/><path d="M5.200 30.800l1.600-1.400 1.400 1.200 1.600-1.600" stroke="#5a92dc" stroke-width="0.700" fill="none"/><rect x="6.600" y="30.600" width="8" height="5.800" rx="1" fill="#f6faff" stroke="#5a92dc" stroke-width="0.900"/><path d="M8 34.400l1.600-1.400 1.400 1.200 1.800-1.600" stroke="#5a92dc" stroke-width="0.700" fill="none"/>
<path d="M982.6 34.3h5" stroke="#4a5f7a" stroke-width="1.3"/>
<g fill="none" stroke="#4a5f7a" stroke-width="0.9"><rect x="997.6" y="30.6" width="4.4" height="3.8"/><path d="M999.4 30.4v-1.6h4.6v3.8h-1.8"/></g>
<path d="M1013.4 28.8l5.6 5.8M1019 28.8l-5.6 5.8" stroke="#4a5f7a" stroke-width="1.5"/>
<path d="M1.9 43.8V58.8" stroke="#b4b4b4" stroke-width="1.6" stroke-dasharray="1 1.1"/>
<rect x="8.400" y="45.600" width="9.700" height="8.300" rx="1" fill="#f3f8fe" stroke="#4b86d2" stroke-width="0.900"/><path d="M8.400 46.900h9.700" stroke="#5a94dc" stroke-width="1.300"/><path d="M10.600 48.800v3.400M10.600 52.200h3" stroke="#6f9bd6" stroke-width="0.600" fill="none"/>
<path d="M15.299999999999999 48.300000000000004h2.8v3.0000000000000004h3.0000000000000004v2.8h-3.0000000000000004v3.0000000000000004h-2.8v-3.0000000000000004h-3.0000000000000004v-2.8h3.0000000000000004z" fill="#1fc41f" stroke="#0c8a10" stroke-width="0.7" stroke-linejoin="round"/>
<path d="M25.7 50.9h4.2l-2.1 2.6z" fill="#111"/>
<rect x="40.4" y="49.6" width="10.4" height="8.3" rx="1" fill="#f4f9ff" stroke="#4b86d2" stroke-width="0.9"/><path d="M42.4 55.400h7M42.400 56.600h7" stroke="#7f9fc8" stroke-width="0.6"/><rect x="37.600" y="45.500" width="10.900" height="8.300" rx="1" fill="#f7fbff" stroke="#4b86d2" stroke-width="0.9"/><path d="M37.600 46.800h10.900" stroke="#5a94dc" stroke-width="1.300"/><path d="M39.600 48.600v3.600M39.600 51.400h6.600M45.200 50.600l1 0.800-1 0.800" stroke="#6f9bd6" stroke-width="0.600" fill="none"/>
<path d="M54.8 50.9h4.2l-2.1 2.6z" fill="#111"/>
<path d="M65.2 43.3V59.6" stroke="#a6a6a6" stroke-width="1"/><path d="M66.2 43.3V59.6" stroke="#fbfbfb" stroke-width="0.8"/>
<rect x="72.8" y="46" width="12.6" height="11.8" rx="1" fill="#fff" stroke="#5b9ae6" stroke-width="1.2"/><path d="M72.8 47.5h12.6" stroke="#5b9ae6" stroke-width="1.6"/><path d="M76.9 48.6l2.6 2.6h-1.5v1.6h-2.2v-1.6h-1.5z" fill="#19b32b"/><path d="M81.3 56.6l-2.6-2.6h1.5v-1.6h2.2v1.6h1.5z" fill="#e8432e"/>
<g fill="none" stroke="#555" stroke-width="1.1"><circle cx="101.7" cy="51.9" r="4.1"/><path d="M101.7 45.900v4.200M101.700 53.700v4.200M95.800 51.900h4.200M103.400 51.900h4.300"/></g>
<path d="M116.6 48.2q0-2.6 2.4-2.6q2 0 2.4 1.6h3.6q1.2 0 1.2 1.2v4.8h-9.6z" fill="#f6d479" stroke="#d9a73a" stroke-width="0.8"/><path d="M119.8 53.4v3.6" stroke="#c9c9c9" stroke-width="0.9" stroke-dasharray="1 0.8"/><path d="M126 49.6l1.5 3 3.3 0.5-2.4 2.3 0.6 3.3-3-1.6-3 1.6 0.6-3.3-2.4-2.3 3.3-0.5z" fill="#f7d04e" stroke="#d39a1e" stroke-width="0.7" stroke-linejoin="round"/>
<rect x="139.8" y="46.5" width="13" height="10.6" rx="1.6" fill="#fff" stroke="#3c8fe2" stroke-width="1.5"/><path d="M143.4 47v9.6" stroke="#9cc3ee" stroke-width="0.8"/><path d="M144.6 49.3h7M144.6 51.8h7M144.6 54.3h7" stroke="#b9c7d6" stroke-width="0.6"/><path d="M141.4 49.3h1.4M141.4 51.8h1.4M141.4 54.3h1.4" stroke="#e0574a" stroke-width="0.9"/>
<rect x="162.6" y="46.2" width="9.4" height="9.2" fill="#f3ead6" stroke="#bfae8c" stroke-width="0.8"/><path d="M165.4 46.2v3M169 46.2v3" stroke="#6e86ad" stroke-width="0.8"/><path d="M170.6 54.6l4.6 4" stroke="#d9a22a" stroke-width="2" stroke-linecap="round"/><circle cx="168" cy="51.6" r="3.7" fill="#d6e8fb" fill-opacity="0.9" stroke="#4a90dd" stroke-width="1.3"/><path d="M168 49.6v2.2h1.6" stroke="#4a90dd" stroke-width="0.7" fill="none"/>
<path d="M182.3 43.3V59.6" stroke="#a6a6a6" stroke-width="1"/><path d="M183.3 43.3V59.6" stroke="#fbfbfb" stroke-width="0.8"/>
<path d="M190.4 46h6l3 2.8v7.2h-9z" fill="#fbfbfb" stroke="#8e8e8e" stroke-width="0.8"/><path d="M196.4 46v2.8h3" fill="none" stroke="#8e8e8e" stroke-width="0.7"/><path d="M192 49.4h3.6M192 51.4h3.6M192 53.4h2.4" stroke="#b5b5b5" stroke-width="0.6"/>
<path d="M197.1 50.8h2.8v2.8000000000000003h2.8000000000000003v2.8h-2.8000000000000003v2.8000000000000003h-2.8v-2.8000000000000003h-2.8000000000000003v-2.8h2.8000000000000003z" fill="#1fc41f" stroke="#0c8a10" stroke-width="0.7" stroke-linejoin="round"/>
<path d="M252.8 52.9l5.4-6.6 7.4 5.2-5.6 6.8z" fill="#e9bf25" stroke="#a8601e" stroke-width="0.9" stroke-linejoin="round"/><path d="M253.4 53.6l6.6 4 5-6" fill="none" stroke="#8f4a1a" stroke-width="1.1" stroke-linejoin="round"/><path d="M256.4 50.6l5.6 4M257.8 48.8l5.6 4" stroke="#f6dd6a" stroke-width="1"/>
<rect x="277.2" y="45.4" width="8.4" height="7" rx="0.8" fill="#3f93ea" stroke="#2a72c8" stroke-width="0.7"/><path d="M279.4 47.4h4M281 47.4v4M282.6 49.4h1.6v2" stroke="#e8f2fd" stroke-width="0.9" fill="none"/><path d="M275.2 56.4q0.2-3.4 3.4-3.2q1.4-1.6 3.2-0.6q1.6-1 3 0.4q3 0 3 3.2q-6.2 2-12.600 0.2z" fill="#f2f5f9" stroke="#6f95c6" stroke-width="0.8"/><path d="M276.2 57.2q5.400 1.5 10.800 0" stroke="#3f86d8" stroke-width="0.9" fill="none"/>
<g fill="none" stroke="#8fb2dc"><circle cx="303.6" cy="51.6" r="5.8" stroke-width="1.2"/><circle cx="303.6" cy="51.6" r="3.6" stroke="#5e93d6" stroke-width="1.2"/></g><circle cx="303.6" cy="51.6" r="1.6" fill="#2f6fc4"/><path d="M305.2 50.4l4.6 0-2.3 7.4z" fill="#3fae3a" stroke="#2a8a2a" stroke-width="0.5"/>
<path d="M320 50.6q0-3 3.4-3.6q1.6-2 4-1q3-0.2 3.6 2.4q1.6 0.8 0.8 2.6z" fill="#5aa0ea" stroke="#2f78cf" stroke-width="0.7"/><path d="M320.6 50.6h11l-2 6.4h-7z" fill="#f0c43a" stroke="#c1922a" stroke-width="0.7"/><circle cx="329.4" cy="54.6" r="3.3" fill="#1aa928" stroke="#0f7e1b" stroke-width="0.6"/><path d="M328.3 52.8l3 1.8-3 1.8z" fill="#fff"/>
<path d="M380 43.3V59.6" stroke="#a6a6a6" stroke-width="1"/><path d="M381 43.3V59.6" stroke="#fbfbfb" stroke-width="0.8"/>
<path d="M383.9 43.8V58.8" stroke="#b4b4b4" stroke-width="1.6" stroke-dasharray="1 1.1"/>
<g stroke="#666" stroke-width="1.0" fill="none"><path d="M394.79999999999995 47V58M392.4 55.8H403.4"/><path d="M393.4 48.2h2.8M402.2 54.6v2.4" stroke-width="0.9"/></g>
<path d="M399.6 48.6v5.8M399.6 48.6h1.4M398.2 54.4h1.4" stroke="#19a42a" stroke-width="1.2" fill="none"/>
<g stroke="#666" stroke-width="1.0" fill="none"><path d="M417.0 47V58M414.6 55.8H425.6"/><path d="M415.6 48.2h2.8M424.40000000000003 54.6v2.4" stroke-width="0.9"/></g>
<path d="M421.2 45.8v9.6" stroke="#19a42a" stroke-width="0.9"/><rect x="419.6" y="47.4" width="3.2" height="5.6" rx="0.6" fill="#27c83a" stroke="#12901f" stroke-width="0.7"/>
<g stroke="#666" stroke-width="1.0" fill="none"><path d="M439.2 47V58M436.8 55.8H447.8"/><path d="M437.8 48.2h2.8M446.6 54.6v2.4" stroke-width="0.9"/></g>
<path d="M439.6 54.2q2.4-5.8 4.8-4.8q1.8 0.8 3 3" stroke="#19a42a" stroke-width="1.1" fill="none"/>
<path d="M455.6 43.3V59.6" stroke="#a6a6a6" stroke-width="1"/><path d="M456.6 43.3V59.6" stroke="#fbfbfb" stroke-width="0.8"/>
<path d="M470.0 53.099999999999994L474.4 57.699999999999996" stroke="#d9a22a" stroke-width="2.3" stroke-linecap="round"/><circle cx="467.2" cy="50.3" r="4.4" fill="#e3effc" stroke="#4a8fdc" stroke-width="1.25"/><path d="M465.0 50.3h4.4" stroke="#2f74c8" stroke-width="1.3"/><path d="M467.2 48.099999999999994v4.4" stroke="#2f74c8" stroke-width="1.3"/>
<path d="M492.6 53.099999999999994L497.0 57.699999999999996" stroke="#d9a22a" stroke-width="2.3" stroke-linecap="round"/><circle cx="489.8" cy="50.3" r="4.4" fill="#e3effc" stroke="#4a8fdc" stroke-width="1.25"/><path d="M487.6 50.3h4.4" stroke="#2f74c8" stroke-width="1.3"/>
<rect x="507" y="45.4" width="6.3" height="6.1" fill="#52a83b" stroke="#3d8a2c" stroke-width="0.5"/><rect x="508" y="47.8" width="4.3" height="2.7" fill="#eef4fb"/>
<rect x="513.9" y="45.4" width="6.3" height="6.1" fill="#3f7fd6" stroke="#2b62b4" stroke-width="0.5"/><rect x="514.9" y="47.8" width="4.3" height="2.7" fill="#eef4fb"/>
<rect x="507" y="52" width="6.3" height="6.1" fill="#3f7fd6" stroke="#2b62b4" stroke-width="0.5"/><rect x="508" y="54.4" width="4.3" height="2.7" fill="#eef4fb"/>
<rect x="513.9" y="52" width="6.3" height="6.1" fill="#52a83b" stroke="#3d8a2c" stroke-width="0.5"/><rect x="514.9" y="54.4" width="4.3" height="2.7" fill="#eef4fb"/>
<path d="M527.5 43.3V59.6" stroke="#a6a6a6" stroke-width="1"/><path d="M528.5 43.3V59.6" stroke="#fbfbfb" stroke-width="0.8"/>
<g stroke="#666" stroke-width="1.0" fill="none"><path d="M538.0 46.8V57.8M535.6 55.599999999999994H546.6"/><path d="M536.6 48.0h2.8M545.4 54.4v2.4" stroke-width="0.9"/></g>
<path d="M541.2 48.8l4 2.6-4 2.6z" fill="#27b53a" stroke="#168a26" stroke-width="0.5"/>
<g stroke="#666" stroke-width="1.0" fill="none"><path d="M560.4 46.8V57.8M558 55.599999999999994H569"/><path d="M559 48.0h2.8M567.8 54.4v2.4" stroke-width="0.9"/></g>
<path d="M565.4 46.6v8" stroke="#5f8fcc" stroke-width="1.4"/><path d="M569.8 51.2l-3.2 0M567.8 49.6l-1.4 1.6 1.4 1.6" stroke="#e2572b" stroke-width="0.9" fill="none"/>
<path d="M576.9 43.3V59.6" stroke="#a6a6a6" stroke-width="1"/><path d="M577.9 43.3V59.6" stroke="#fbfbfb" stroke-width="0.8"/>
<path d="M585 46h5.6l2.8 2.8v7h-8.4z" fill="#fbfbfb" stroke="#8e8e8e" stroke-width="0.8"/><path d="M590.6 46v2.8h2.8" fill="none" stroke="#8e8e8e" stroke-width="0.7"/><path d="M587.4 49.4v4.4M586.6 50.6h1.8M587 52.4h1.6" stroke="#666" stroke-width="0.7"/>
<path d="M591.6 50.5h2.8v2.8000000000000003h2.8000000000000003v2.8h-2.8000000000000003v2.8000000000000003h-2.8v-2.8000000000000003h-2.8000000000000003v-2.8h2.8000000000000003z" fill="#1fc41f" stroke="#0c8a10" stroke-width="0.7" stroke-linejoin="round"/>
<path d="M600.6 50.9h4.2l-2.1 2.6z" fill="#111"/>
<circle cx="619.6" cy="51.6" r="5.9" fill="#f4f8fd" stroke="#2f74d0" stroke-width="1.9"/><path d="M619.6 48v3.8h2.8" fill="none" stroke="#555" stroke-width="0.9"/>
<path d="M630 50.9h4.2l-2.1 2.6z" fill="#111"/>
<rect x="643.2" y="46" width="12.6" height="11.4" rx="0.8" fill="#f6f9fd" stroke="#4f8ad6" stroke-width="1.2"/><path d="M643.2 47.4h12.6" stroke="#4f8ad6" stroke-width="1.6"/><path d="M644.8 51.6l2.4-1.2 2 0.6 2.4-1.6 2.6-0.6" fill="none" stroke="#e06b2a" stroke-width="0.9"/><path d="M644.8 55.4l2-1.6 1.8 1.2 2-1.8 1.8 1.4 1.8-1" fill="none" stroke="#3aa53a" stroke-width="0.9"/>
<path d="M659.4 50.9h4.2l-2.1 2.6z" fill="#111"/>
<path d="M986.200 52.200l-4 3.800" stroke="#3b79d2" stroke-width="2.300" stroke-linecap="round"/><circle cx="988.500" cy="49.700" r="3.100" fill="#f7fbff" stroke="#4a86dc" stroke-width="1.400"/>
<path d="M1000.8 52.2q0-2.4 2.6-2.4h3.6q2.6 0 2.6 2.4v1.6q0 2.4-2.6 2.4h-2.4l-2.4 2.4v-2.6q-1.4-0.6-1.4-2.2z" fill="#e9e9e9" stroke="#c4c4c4" stroke-width="0.700"/>
<circle cx="1012.500" cy="49.800" r="6.500" fill="#e32b1c"/>
<text x="1012.300" y="52.700" font-size="8.200" fill="#fff" text-anchor="middle">1</text>
<path d="M1.9 65.4V80.4" stroke="#b4b4b4" stroke-width="1.6" stroke-dasharray="1 1.1"/>
<path d="M12.2 68v10l2.4-2.2 1.7 3.7 1.5-0.7-1.7-3.6 3.1-0.2z" fill="#333"/>
<path d="M38.100 67.800v4.600M38.100 75.200v4.600M32 73.800h4.700M39.500 73.800h4.700" stroke="#808080" stroke-width="1.1"/>
<path d="M51.5 65V80.4" stroke="#a6a6a6" stroke-width="1"/><path d="M52.5 65V80.4" stroke="#fbfbfb" stroke-width="0.8"/>
<path d="M64.8 68.6v10.4" stroke="#6c6c6c" stroke-width="1.5"/>
<path d="M83.2 73.7h9.6" stroke="#6c6c6c" stroke-width="1.3"/>
<path d="M105.4 78.6l9.2-9.4" stroke="#6c6c6c" stroke-width="1.2"/>
<g stroke="#5a5a5a" stroke-width="1.05" fill="none"><path d="M125.800 76l9.800-8M127.400 78.200l9.800-8M129.200 80.200l8.400-6.800"/><path d="M128.6 72.6l3.6 5.4M132.4 69.8l3.4 5.2" stroke-width="0.8"/></g>
<text x="135.4" y="81" font-size="4.8" font-weight="700" fill="#444">E</text>
<g stroke="#8a8a8a" stroke-width="0.9" stroke-dasharray="1 0.8"><path d="M149 68.4h11M149 70.8h11M149 73.4h11M149 76h11M149 78.4h7"/></g>
<text x="157" y="81.2" font-size="4.8" font-weight="700" fill="#444">F</text>
<text x="176.8" y="77.4" font-size="9.6" font-weight="700" fill="#6a6a6a" text-anchor="middle">A</text>
<rect x="194.4" y="68.2" width="9.4" height="10.2" fill="none" stroke="#909090" stroke-width="0.8" stroke-dasharray="1 0.9"/><text x="199.1" y="77" font-size="8.4" font-weight="700" fill="#555" text-anchor="middle" font-family="'Liberation Serif',serif">T</text>
<path d="M217.2 70.6l2.6-1.6 2.6 2-2.6 1.8z" fill="#555"/><path d="M222.4 76.2l2.6-1.6 2.6 2-2.6 1.8z" fill="#555"/><path d="M219.4 74.4l1.2 1.4 2.2-2.4" stroke="#555" stroke-width="0.9" fill="none"/>
<path d="M231 72.6h4.2l-2.1 2.6z" fill="#111"/>
<path d="M240.6 64.6V81" stroke="#a6a6a6" stroke-width="1"/><path d="M241.6 64.6V81" stroke="#fbfbfb" stroke-width="0.8"/>
<path d="M243.9 65.4V80.4" stroke="#b4b4b4" stroke-width="1.6" stroke-dasharray="1 1.1"/>
<path d="M14.6 464.6h5.4l2.8 2.8v8.2h-8.2z" fill="#fdfdfd" stroke="#8a8a8a" stroke-width="0.8"/><path d="M20 464.6v2.8h2.8" fill="none" stroke="#8a8a8a" stroke-width="0.7"/><circle cx="22.6" cy="474" r="2.5" fill="#2f8be6" stroke="#1c62b4" stroke-width="0.6"/>
<rect x="14.8" y="480.6" width="8.8" height="10.4" rx="1.2" fill="#f6f6f6" stroke="#8a8a8a" stroke-width="0.8"/><path d="M19.2 488.6l-2.8-3.2h1.7v-2.2h2.2v2.2h1.7z" fill="#e2511f"/>
<path d="M911.20 565.4v8.60" stroke="#7aa52c" stroke-width="1.1"/>
<path d="M911.20 574.00V576.2" stroke="#2b5f96" stroke-width="1.1"/>
<path d="M913.05 565.4v7.65" stroke="#7aa52c" stroke-width="1.1"/>
<path d="M913.05 573.05V576.2" stroke="#2b5f96" stroke-width="1.1"/>
<path d="M914.90 565.4v6.70" stroke="#7aa52c" stroke-width="1.1"/>
<path d="M914.90 572.10V576.2" stroke="#2b5f96" stroke-width="1.1"/>
<path d="M916.75 565.4v5.75" stroke="#7aa52c" stroke-width="1.1"/>
<path d="M916.75 571.15V576.2" stroke="#2b5f96" stroke-width="1.1"/>
<path d="M918.60 565.4v4.80" stroke="#7aa52c" stroke-width="1.1"/>
<path d="M918.60 570.20V576.2" stroke="#2b5f96" stroke-width="1.1"/>
<path d="M920.45 565.4v3.85" stroke="#7aa52c" stroke-width="1.1"/>
<path d="M920.45 569.25V576.2" stroke="#2b5f96" stroke-width="1.1"/>
<path d="M922.30 565.4v2.90" stroke="#7aa52c" stroke-width="1.1"/>
<path d="M922.30 568.30V576.2" stroke="#2b5f96" stroke-width="1.1"/>
<path d="M924.15 565.4v1.95" stroke="#7aa52c" stroke-width="1.1"/>
<path d="M924.15 567.35V576.2" stroke="#2b5f96" stroke-width="1.1"/>
<path d="M926.00 565.4v1.00" stroke="#7aa52c" stroke-width="1.1"/>
<path d="M926.00 566.40V576.2" stroke="#2b5f96" stroke-width="1.1"/>
<path d="M927.85 565.45V576.2" stroke="#2b5f96" stroke-width="1.1"/>
<path d="M1013 578l9-9M1016 578l6-6M1019 578l3-3" stroke="#a8a8a8" stroke-width="0.9"/>
</svg>
</div></body></html>
